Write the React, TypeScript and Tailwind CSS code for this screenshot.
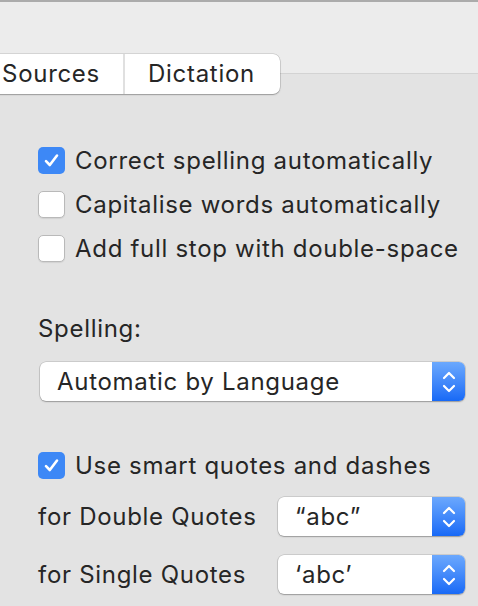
import React from "react";

const font = { fontFamily: "Inter, 'Noto Sans', sans-serif" };

function Check({ checked }: { checked: boolean }) {
  if (checked) {
    return (
      <div className="w-[27px] h-[27px] rounded-[5px] bg-[#3d88f6] flex items-center justify-center shrink-0">
        <svg width="17" height="17" viewBox="0 0 17 17">
          <path d="M3 9.2 L6.8 13 L14 3.5" fill="none" stroke="white" strokeWidth="2.6" strokeLinecap="round" strokeLinejoin="round" />
        </svg>
      </div>
    );
  }
  return <div className="w-[27px] h-[27px] rounded-[5px] bg-white border border-[#b9b9b9] shadow-[0_1px_1px_rgba(0,0,0,0.08)] shrink-0" />;
}

function Stepper() {
  return (
    <div className="w-[33px] self-stretch rounded-r-[6px] bg-gradient-to-b from-[#6ba8fd] to-[#1769f6] flex items-center justify-center">
      <svg width="16" height="26" viewBox="0 0 16 26">
        <path d="M3 9 L8 4 L13 9" fill="none" stroke="white" strokeWidth="2.2" strokeLinecap="round" strokeLinejoin="round" />
        <path d="M3 17 L8 22 L13 17" fill="none" stroke="white" strokeWidth="2.2" strokeLinecap="round" strokeLinejoin="round" />
      </svg>
    </div>
  );
}

function Select({ value, className }: { value: string; className: string }) {
  return (
    <div className={"h-[39px] flex rounded-[6px] bg-white shadow-[0_0_0_0.5px_rgba(0,0,0,0.2),0_1px_1.5px_rgba(0,0,0,0.25)] " + className}>
      <div className="flex-1 flex items-center pl-[17px] text-[24px] tracking-[0.7px] text-[#262626]">{value}</div>
      <Stepper />
    </div>
  );
}

function Row({ checked, label }: { checked: boolean; label: string }) {
  return (
    <div className="flex items-center gap-[10px] h-[27px]">
      <Check checked={checked} />
      <span className="text-[24px] tracking-[0.7px] text-[#262626] leading-none">{label}</span>
    </div>
  );
}

export default function App() {
  return (
    <div className="w-[478px] h-[606px] overflow-hidden bg-[#e3e3e3] flex flex-col" style={font}>
      <div className="h-[74px] shrink-0 bg-[#ececec] border-t-2 border-[#ababab] border-b border-b-[#d3d3d3] pt-[52px]">
        <div className="relative z-10 flex h-[40px] w-[301px] -ml-[21px] bg-white rounded-[7px] shadow-[0_0_0_0.5px_rgba(0,0,0,0.2),0_1px_1.5px_rgba(0,0,0,0.25)] text-[24px] tracking-[0.7px] text-[#262626]">
          <div className="w-[146px] flex items-center justify-center border-r-2 border-[#e0e0e0]">Sources</div>
          <div className="flex-1 flex items-center justify-center pr-[2px]">Dictation</div>
        </div>
      </div>
      <div className="pl-[38px] pr-[13px] pt-[73px] flex flex-col">
        <div className="flex flex-col gap-[17px]">
          <Row checked label="Correct spelling automatically" />
          <Row checked={false} label="Capitalise words automatically" />
          <Row checked={false} label="Add full stop with double-space" />
        </div>
        <div className="mt-[53px] text-[24px] tracking-[0.7px] text-[#262626] leading-[28px]">Spelling:</div>
        <Select value="Automatic by Language" className="mt-[19px] ml-[2px]" />
        <div className="mt-[51px]">
          <Row checked label="Use smart quotes and dashes" />
        </div>
        <div className="mt-[18px] flex items-center">
          <span className="w-[240px] text-[24px] tracking-[0.7px] text-[#262626]">for Double Quotes</span>
          <Select value="“abc”" className="flex-1" />
        </div>
        <div className="mt-[19px] flex items-center">
          <span className="w-[240px] text-[24px] tracking-[0.7px] text-[#262626]">for Single Quotes</span>
          <Select value="‘abc’" className="flex-1" />
        </div>
      </div>
    </div>
  );
}
